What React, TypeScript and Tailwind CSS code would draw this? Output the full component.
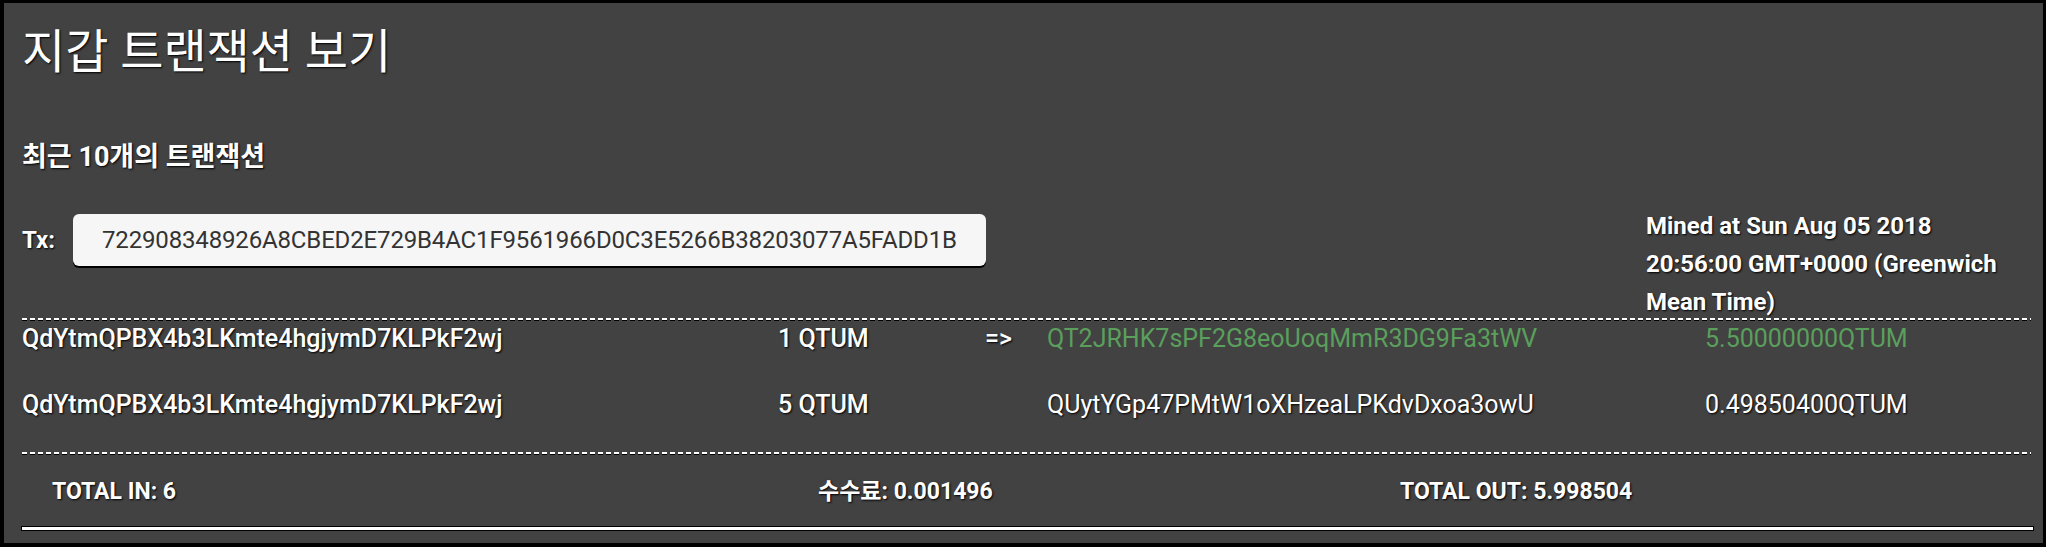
import React from "react";

const shadow = "[text-shadow:1px_1px_2px_#000]";

const rows = [
  {
    from: "QdYtmQPBX4b3LKmte4hgjymD7KLPkF2wj",
    amount: "1 QTUM",
    arrow: true,
    to: "QT2JRHK7sPF2G8eoUoqMmR3DG9Fa3tWV",
    value: "5.50000000QTUM",
    mine: true,
  },
  {
    from: "QdYtmQPBX4b3LKmte4hgjymD7KLPkF2wj",
    amount: "5 QTUM",
    arrow: false,
    to: "QUytYGp47PMtW1oXHzeaLPKdvDxoa3owU",
    value: "0.49850400QTUM",
    mine: false,
  },
];

const Dashed = () => (
  <div className="h-[2px] w-full bg-[repeating-linear-gradient(90deg,#ffffff_0_5px,transparent_5px_8px)] [filter:drop-shadow(0_1px_0_#000)]"></div>
);

const App = () => {
  return (
    <div
      className="w-[2046px] h-[547px] bg-black pt-[3px] pr-[3px] pb-[4px] pl-[4px]"
      style={{ fontFamily: "Roboto, 'Noto Sans CJK KR', sans-serif" }}
    >
      <div className="h-full bg-[#424242] pl-[18px] pr-[10px] flex flex-col text-white">
        <h1 className={`mt-[19px] text-[47px] leading-[60px] font-normal ${shadow}`}>
          지갑 트랜잭션 보기
        </h1>

        <h2 className={`mt-[59px] text-[27px] leading-[32px] font-bold ${shadow}`}>
          최근 10개의 트랜잭션
        </h2>

        {/* tx id + mined time */}
        <div className="mt-[31px] h-[114px] flex items-start">
          <div className="mt-[10px] flex items-center">
            <span className={`text-[24px] font-bold ${shadow}`}>Tx:</span>
            <div className="ml-[18px] w-[913px] h-[52px] rounded-md bg-[#f6f6f6] shadow-[0_2px_0_#000] flex items-center pl-[29px] text-[24px] tracking-[-0.15px] text-[#333333]">
              722908348926A8CBED2E729B4AC1F9561966D0C3E5266B38203077A5FADD1B
            </div>
          </div>
          <div className={`mt-[3px] ml-[660px] w-[376px] text-[24px] leading-[38px] font-bold ${shadow}`}>
            Mined at Sun Aug 05 2018 20:56:00 GMT+0000 (Greenwich Mean Time)
          </div>
        </div>

        <div className="pr-[2px]">
          <Dashed />
        </div>

        <div className="flex flex-col">
          {rows.map((r, i) => (
            <div
              key={i}
              className={`flex items-center text-[25px] ${i === 0 ? "h-[38px]" : "h-[94px]"}`}
            >
              <span className={`w-[756px] font-medium ${shadow}`}>{r.from}</span>
              <span className={`w-[207px] font-medium ${shadow}`}>{r.amount}</span>
              <span className={`w-[62px] font-medium ${shadow}`}>{r.arrow ? "=>" : ""}</span>
              <span className={`w-[658px] ${r.mine ? "text-[#5a9f5c]" : shadow}`}>{r.to}</span>
              <span className={r.mine ? "text-[#5a9f5c]" : shadow}>{r.value}</span>
            </div>
          ))}
        </div>

        <div className="pr-[2px]">
          <Dashed />
        </div>

        <div className={`flex items-center pt-[4px] h-[73px] text-[23px] font-bold ${shadow}`}>
          <span className="ml-[30px] w-[766px]">TOTAL IN: 6</span>
          <span className="w-[582px]">수수료: 0.001496</span>
          <span>TOTAL OUT: 5.998504</span>
        </div>

        <div className="h-[3px] bg-white shadow-[0_0_0_1px_#000]"></div>
      </div>
    </div>
  );
};

export default App;
